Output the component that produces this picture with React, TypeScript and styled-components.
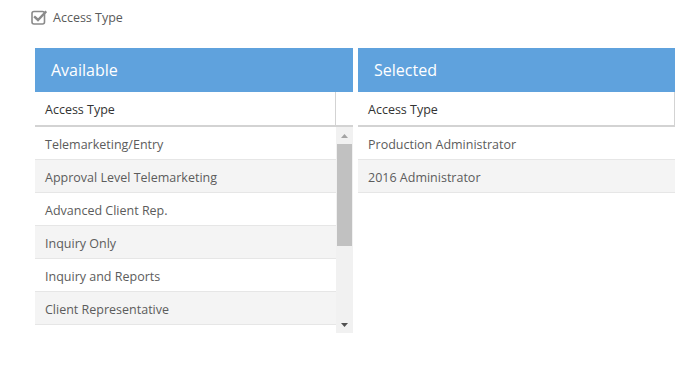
import React from "react";
import styled, { createGlobalStyle } from "styled-components";

const Global = createGlobalStyle`
  html, body { margin: 0; padding: 0; background: #fff; }
  body { font-family: "Open Sans", "Liberation Sans", Arial, sans-serif; }
`;

const Page = styled.div`
  padding: 8px 24px 0 31px;
`;

const CheckRow = styled.label`
  display: flex;
  align-items: center;
  gap: 6px;
  height: 18px;
  font-size: 12.5px;
  color: #5a5a5a;
`;

const Panels = styled.div`
  display: flex;
  gap: 5px;
  margin-top: 22px;
  margin-left: 4px;
`;

const Panel = styled.div<{ $w: number }>`
  width: ${(p) => p.$w}px;
  display: flex;
  flex-direction: column;
`;

const PanelTitle = styled.div`
  height: 44px;
  background: #5fa2dd;
  color: #fff;
  font-size: 16px;
  display: flex;
  align-items: center;
  padding-left: 16px;
`;

const ColHeader = styled.div<{ $right?: boolean }>`
  display: flex;
  height: 33px;
  border-bottom: 2px solid #d3d3d3;
  border-right: ${(p) => (p.$right ? "1px solid #d3d3d3" : "none")};
  font-size: 12.5px;
  color: #333;
`;

const ColCell = styled.div<{ $divider?: boolean }>`
  flex: 1;
  display: flex;
  align-items: center;
  padding: 2px 0 0 10px;
  border-right: ${(p) => (p.$divider ? "1px solid #d3d3d3" : "none")};
`;

const ScrollGutter = styled.div`
  width: 17px;
  flex: none;
`;

const Body = styled.div`
  display: flex;
  height: 206px;
`;

const List = styled.div`
  flex: 1;
  overflow: hidden;
`;

const Row = styled.div<{ $alt: boolean }>`
  height: 33px;
  box-sizing: border-box;
  padding: 2px 0 0 10px;
  border-bottom: 1px solid #e6e6e6;
  background: ${(p) => (p.$alt ? "#f4f4f4" : "#fff")};
  display: flex;
  align-items: center;
  font-size: 12.5px;
  color: #5c5c5c;
`;

const Track = styled.div`
  width: 17px;
  flex: none;
  background: #f1f1f1;
  display: flex;
  flex-direction: column;
`;

const ArrowBtn = styled.div`
  height: 17px;
  display: flex;
  align-items: center;
  justify-content: center;
`;

const Thumb = styled.div`
  height: 102px;
  margin: 0 1px;
  background: #c1c1c1;
`;

const Spacer = styled.div`
  flex: 1;
`;

const Arrow = ({ up }: { up?: boolean }) => (
  <svg width="7" height="4" viewBox="0 0 7 4">
    <polygon points={up ? "0,4 7,4 3.5,0" : "0,0 7,0 3.5,4"} fill={up ? "#a3a3a3" : "#505050"} />
  </svg>
);

const CheckIcon = () => (
  <svg width="16" height="16" viewBox="0 0 16 16">
    <rect x="1" y="2.5" width="12.5" height="12.5" rx="2" fill="none" stroke="#8a8a8a" strokeWidth="1.6" />
    <path d="M4 8.2 L7 11 L14.5 3.2" fill="none" stroke="#8a8a8a" strokeWidth="2.4" strokeLinecap="square" />
  </svg>
);

const available = [
  "Telemarketing/Entry",
  "Approval Level Telemarketing",
  "Advanced Client Rep.",
  "Inquiry Only",
  "Inquiry and Reports",
  "Client Representative",
];

const selected = ["Production Administrator", "2016 Administrator"];

export default function App() {
  return (
    <Page>
      <Global />
      <CheckRow>
        <CheckIcon />
        Access Type
      </CheckRow>
      <Panels>
        <Panel $w={318}>
          <PanelTitle>Available</PanelTitle>
          <ColHeader>
            <ColCell $divider>Access Type</ColCell>
            <ScrollGutter />
          </ColHeader>
          <Body>
            <List>
              {available.map((t, i) => (
                <Row key={t} $alt={i % 2 === 1}>
                  {t}
                </Row>
              ))}
            </List>
            <Track>
              <ArrowBtn>
                <Arrow up />
              </ArrowBtn>
              <Thumb />
              <Spacer />
              <ArrowBtn>
                <Arrow />
              </ArrowBtn>
            </Track>
          </Body>
        </Panel>
        <Panel $w={317}>
          <PanelTitle>Selected</PanelTitle>
          <ColHeader $right>
            <ColCell>Access Type</ColCell>
          </ColHeader>
          <List>
            {selected.map((t, i) => (
              <Row key={t} $alt={i % 2 === 1}>
                {t}
              </Row>
            ))}
          </List>
        </Panel>
      </Panels>
    </Page>
  );
}
